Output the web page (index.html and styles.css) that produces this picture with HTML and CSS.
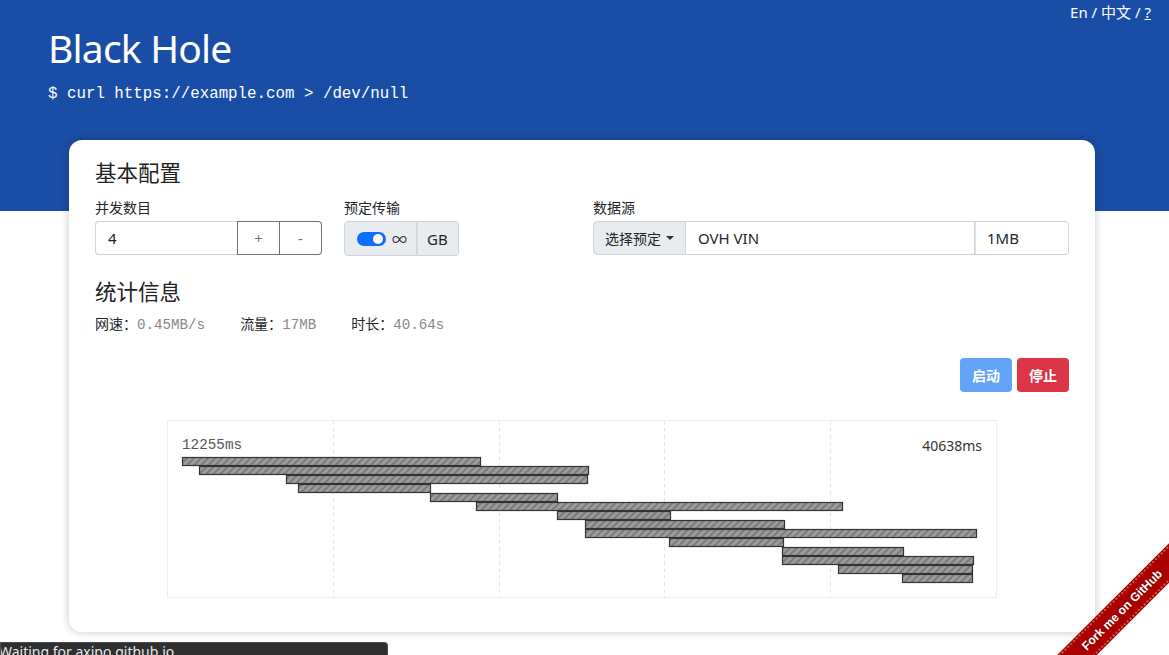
FILE: index.html
```html
<!DOCTYPE html>
<html lang="zh">
<head>
<meta charset="utf-8">
<title>Black Hole</title>
<link rel="stylesheet" href="styles.css">
</head>
<body>
<header class="hero">
  <nav class="lang">En / 中文 / <u>?</u></nav>
  <h1 class="title">Black Hole</h1>
  <p class="cmd">$ curl https://example.com &gt; /dev/null</p>
</header>

<main class="card">
  <h2 class="section">基本配置</h2>
  <div class="grid">
    <div class="col">
      <label class="label">并发数目</label>
      <div class="igroup">
        <input class="field num" value="4">
        <button class="obtn">+</button>
        <button class="obtn last">-</button>
      </div>
    </div>
    <div class="col">
      <label class="label">预定传输</label>
      <div class="igroup">
        <span class="addon sw-wrap"><span class="switch"><span class="knob"></span></span><span class="inf">∞</span></span>
        <span class="addon gb">GB</span>
      </div>
    </div>
    <div class="col wide">
      <label class="label">数据源</label>
      <div class="igroup">
        <span class="addon pick">选择预定 <span class="caret"></span></span>
        <input class="field url" value="OVH VIN">
        <input class="field size" value="1MB">
      </div>
    </div>
  </div>

  <h2 class="section stats-title">统计信息</h2>
  <div class="stats">
    <span class="stat">网速：<code>0.45MB/s</code></span>
    <span class="stat">流量：<code>17MB</code></span>
    <span class="stat">时长：<code>40.64s</code></span>
  </div>

  <div class="actions">
    <button class="btn start">启动</button>
    <button class="btn stop">停止</button>
  </div>

  <div class="chart">
    <svg width="830" height="178" viewBox="0 0 830 178">
      <defs>
        <pattern id="stripe" width="5" height="5" patternUnits="userSpaceOnUse" patternTransform="rotate(45)">
          <rect width="5" height="5" fill="#9c9c98"/>
          <rect width="2" height="5" fill="#7a7a80"/>
        </pattern>
      </defs>
      <rect x="0.5" y="0.5" width="829" height="177" fill="#fff" stroke="#eeeeee"/>
      <g stroke="#e4e4e8" stroke-dasharray="4 3">
        <line x1="166.5" y1="1" x2="166.5" y2="177"/>
        <line x1="332.5" y1="1" x2="332.5" y2="177"/>
        <line x1="497.5" y1="1" x2="497.5" y2="177"/>
        <line x1="663.5" y1="1" x2="663.5" y2="177"/>
      </g>
      <text x="15" y="29" class="lbl-left">12255ms</text>
      <text x="815" y="31" class="lbl-right" text-anchor="end">40638ms</text>
      <g fill="url(#stripe)" stroke="#333" stroke-width="1.2">
        <rect x="15.5" y="37.5" width="298" height="8"/>
        <rect x="32.5" y="46.5" width="389" height="8"/>
        <rect x="119.5" y="55.5" width="301" height="8"/>
        <rect x="131.5" y="64.5" width="132" height="8"/>
        <rect x="263.5" y="73.5" width="127" height="8"/>
        <rect x="309.5" y="82.5" width="366" height="8"/>
        <rect x="390.5" y="91.5" width="113" height="8"/>
        <rect x="418.5" y="100.5" width="199" height="8"/>
        <rect x="418.5" y="109.5" width="391" height="8"/>
        <rect x="502.5" y="118.5" width="114" height="8"/>
        <rect x="615.5" y="127.5" width="121" height="8"/>
        <rect x="615.5" y="136.5" width="191" height="8"/>
        <rect x="671.5" y="145.5" width="134" height="8"/>
        <rect x="735.5" y="154.5" width="70" height="8"/>
      </g>
    </svg>
  </div>
</main>

<a class="ribbon">Fork me on GitHub</a>
<div class="status">Waiting for axipo.github.io</div>
</body>
</html>
```

FILE: styles.css
```css
* { box-sizing: border-box; }
html, body { margin: 0; padding: 0; }
body {
  background: #fff;
  font-family: "Noto Sans", "Noto Sans CJK SC", sans-serif;
  color: #212529;
  font-size: 14px;
  overflow: hidden;
  height: 655px;
  position: relative;
}

.hero {
  background: #1a4da6;
  height: 211px;
  padding: 25px 48px 0;
  position: relative;
  color: #fff;
}
.lang {
  position: absolute;
  top: 1px;
  right: 18px;
  font-size: 15px;
  line-height: 22px;
  color: #fff;
}
.title {
  margin: 0;
  font-weight: 400;
  font-size: 39px;
  line-height: 46px;
  letter-spacing: -0.8px;
}
.cmd {
  margin: 14px 0 0;
  font-family: "Liberation Mono", monospace;
  font-size: 15.8px;
  line-height: 18px;
}

.card {
  position: relative;
  margin: -71px 74px 0 69px;
  width: 1026px;
  height: 492px;
  background: #fff;
  border-radius: 13px;
  box-shadow: 0 0 10px rgba(0, 0, 0, 0.22);
  padding: 20px 26px 0;
}

.section {
  margin: 0;
  font-size: 21.5px;
  font-weight: 400;
  line-height: 26px;
  color: #222;
}

.grid {
  display: grid;
  grid-template-columns: 227px 227px 1fr;
  column-gap: 22px;
  margin-top: 11px;
}
.label {
  display: block;
  font-size: 14px;
  line-height: 21px;
  margin-bottom: 3px;
}
.igroup {
  display: flex;
  height: 34px;
}
.field {
  border: 1px solid #ced4da;
  font-family: "Noto Sans", "Noto Sans CJK SC", sans-serif;
  font-size: 15px;
  color: #212529;
  padding: 0 12px;
  height: 34px;
  background: #fff;
  outline: none;
  min-width: 0;
}
.num {
  width: 142px;
  border-radius: 4px 0 0 4px;
  border-right: none;
}
.obtn {
  width: 43px;
  height: 34px;
  border: 1px solid #6c757d;
  background: #fff;
  color: #6c757d;
  font-size: 15px;
  font-family: "Noto Sans", sans-serif;
  padding: 0;
}
.obtn.last {
  width: 42px;
  border-left: none;
  border-radius: 0 4px 4px 0;
}
.addon {
  display: flex;
  align-items: center;
  background: #e9ecef;
  border: 1px solid #ced4da;
  height: 35px;
  font-size: 15px;
  color: #212529;
}
.sw-wrap {
  padding: 0 9px 0 12px;
  border-radius: 4px 0 0 4px;
  gap: 6px;
}
.switch {
  width: 29px;
  height: 14px;
  border-radius: 7px;
  background: #0d6efd;
  position: relative;
  display: inline-block;
}
.knob {
  position: absolute;
  right: 3px;
  top: 2px;
  width: 10px;
  height: 10px;
  border-radius: 50%;
  background: #fff;
}
.inf { font-size: 15px; color: #333; }
.gb {
  padding: 0 10px;
  border-left: none;
  border-radius: 0 4px 4px 0;
  box-shadow: inset 1px 0 0 #dadde1;
}
.pick {
  padding: 0 11px;
  height: 34px;
  border-radius: 4px 0 0 4px;
  font-size: 14px;
  gap: 0;
}
.caret {
  display: inline-block;
  width: 0;
  height: 0;
  margin-left: 5px;
  border-left: 4px solid transparent;
  border-right: 4px solid transparent;
  border-top: 4px solid #333;
}
.url {
  flex: 1;
  border-left: none;
  font-size: 15px;
}
.size {
  width: 94px;
  border-left: none;
  border-radius: 0 4px 4px 0;
  box-shadow: inset 1px 0 0 #dee2e6;
}

.stats-title { margin-top: 24px; }
.stats {
  display: flex;
  gap: 35px;
  margin-top: 8px;
  line-height: 21px;
  font-size: 14px;
}
.stat code {
  font-family: "Liberation Mono", monospace;
  font-size: 14.2px;
  color: #888;
}

.actions {
  display: flex;
  justify-content: flex-end;
  gap: 5px;
  margin-top: 22px;
}
.btn {
  height: 34px;
  width: 52px;
  border: none;
  border-radius: 4px;
  color: #fff;
  font-size: 14px;
  font-weight: 700;
  font-family: "Noto Sans CJK SC", sans-serif;
  padding: 0;
}
.start { background: #63a4f8; }
.stop { background: #dc3545; }

.chart {
  display: flex;
  justify-content: center;
  margin-top: 28px;
}
.chart svg { display: block; }
.lbl-left {
  font-family: "Liberation Mono", monospace;
  font-size: 14.3px;
  fill: #555;
}
.lbl-right {
  font-family: "Noto Sans", sans-serif;
  font-size: 14px;
  fill: #333;
}

.ribbon {
  position: absolute;
  right: -78px;
  bottom: 32px;
  width: 250px;
  height: 26px;
  line-height: 22px;
  background: #a00;
  color: #fff;
  font-family: "Liberation Sans", sans-serif;
  font-weight: 700;
  font-size: 12px;
  text-align: center;
  transform: rotate(-45deg);
  border-top: 2px dotted rgba(255, 255, 255, 0.35);
  border-bottom: 2px dotted rgba(255, 255, 255, 0.35);
  box-shadow: 0 0 0 1px #a00;
  text-shadow: 0 0 2px rgba(0, 0, 0, 0.4);
}

.status {
  position: absolute;
  left: 0;
  bottom: 0;
  width: 388px;
  height: 13px;
  background: #2d2f31;
  border: 1px solid #4a4c4e;
  border-bottom: none;
  border-radius: 0 4px 0 0;
  color: #e8e8e8;
  font-family: "Noto Sans", sans-serif;
  font-size: 14px;
  line-height: 18px;
  text-indent: -2px;
  white-space: nowrap;
  overflow: hidden;
}
```
